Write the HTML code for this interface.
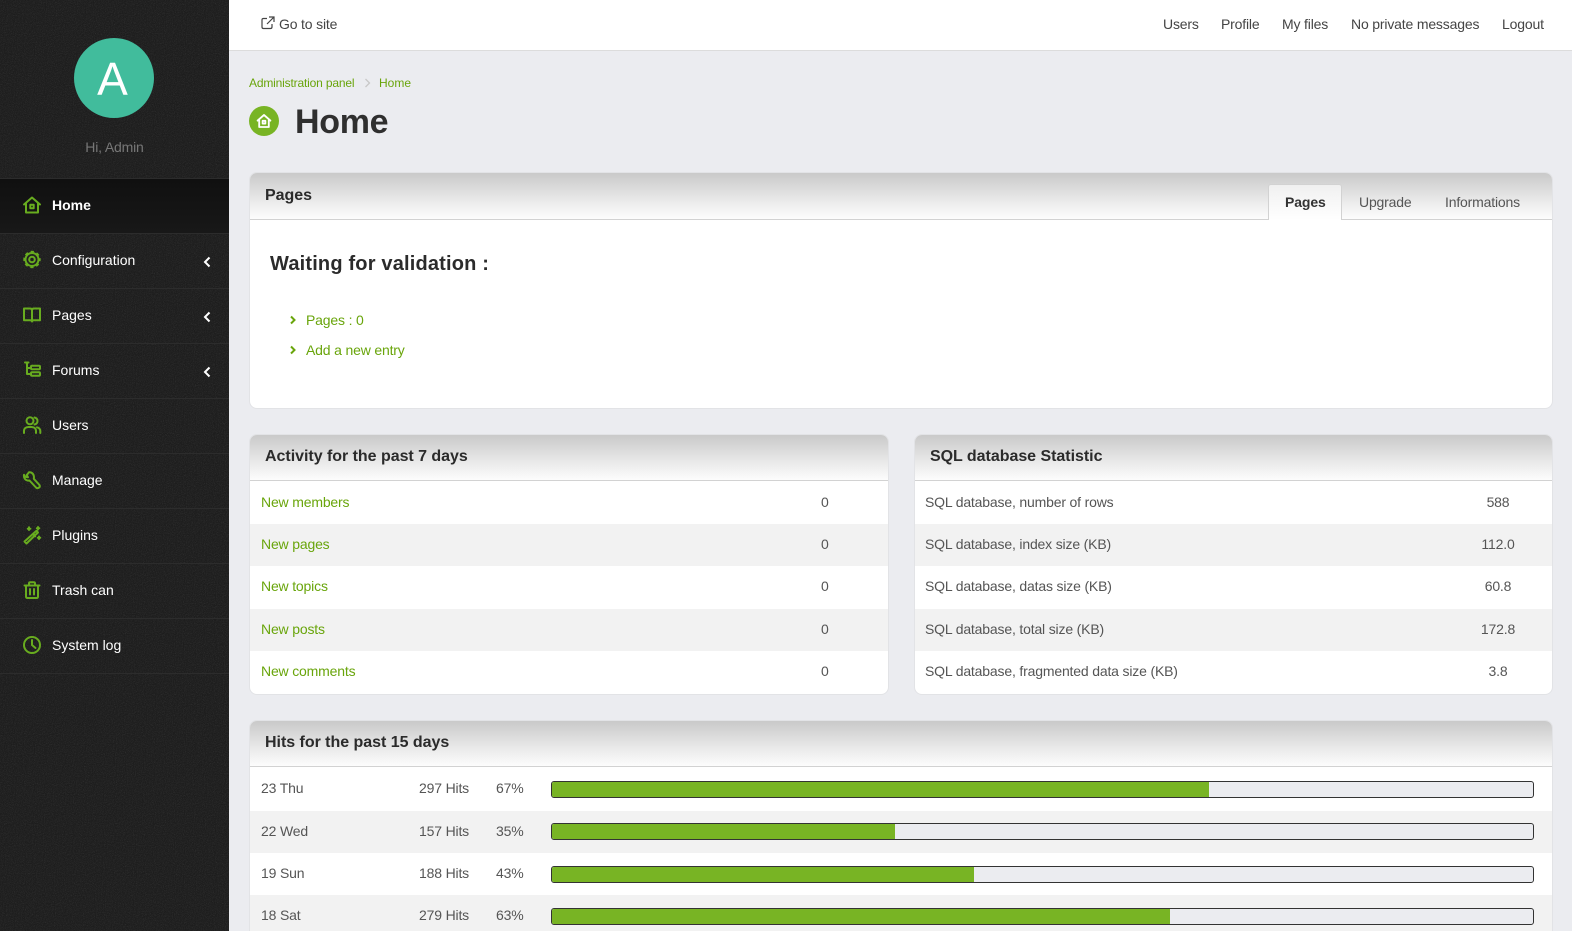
<!DOCTYPE html>
<html><head><meta charset="utf-8"><title>Home</title>
<style>
*{box-sizing:border-box}
html,body{margin:0;padding:0;width:1572px;height:931px;overflow:hidden;background:#ebecf0;font-family:"Liberation Sans",sans-serif;font-size:14px;color:#555}
#wrap{position:relative;width:1572px;height:931px;overflow:hidden;background:#ebecf0}
.t{position:absolute;white-space:nowrap;line-height:20px;letter-spacing:-.17px}
.abs{position:absolute}
#side{position:absolute;left:0;top:0;width:229px;height:931px;background:#1f1f1f;overflow:hidden}
.line{position:absolute;left:0;width:229px;height:1px;background:#2c2c2c}
.t.m{color:#fff;left:52px;letter-spacing:0}
.ic{position:absolute;left:21px;width:20px;height:20px;fill:none;stroke:#68ac1f;stroke-width:2;stroke-linecap:round;stroke-linejoin:round}
.ch{position:absolute;left:202px;width:10px;height:12px;fill:none;stroke:#fff;stroke-width:2}
.panel{position:absolute;background:#fff;border:1px solid #e2e3e6;border-radius:8px;overflow:hidden}
.head{position:absolute;left:0;top:0;right:0;background:linear-gradient(#c9c9c9,#ececec 65%,#fcfcfc);border-bottom:1px solid #d2d2d2}
.t.h{font-weight:bold;font-size:16px;color:#2b2b2b;letter-spacing:-.03px}
.g{color:#69a50b}
.row{position:absolute;height:42px;background:#f2f2f2}
.bar{position:absolute;left:551px;width:983px;height:17px;background:#ebecf0;border:1px solid #333;border-radius:3px;overflow:hidden}
.bar i{display:block;height:100%;background:#78b424}
.top{color:#444}
</style></head><body><div id="wrap">
<div id="side">
<svg class="abs" style="left:0;top:0" width="229" height="931"><filter id="n"><feTurbulence type="fractalNoise" baseFrequency="1.1" numOctaves="2" seed="3"/><feColorMatrix values="0 0 0 0 .5 0 0 0 0 .5 0 0 0 0 .5 .5 .5 0 0 -.42"/></filter><rect width="229" height="931" fill="#1d1d1d"/><rect width="229" height="931" filter="url(#n)" opacity=".35"/></svg>
<div class="abs" style="left:0;top:179px;width:229px;height:54px;background:linear-gradient(#101010,#181818)"></div>
<div class="abs" style="left:74px;top:38px;width:80px;height:80px;border-radius:50%;background:#41bc9c"></div>
<div class="t" style="left:72.500px;top:59px;width:80px;text-align:center;color:#fff;font-size:46px;line-height:40px;letter-spacing:0">A</div>
<div class="t" style="left:0;top:137px;width:229px;text-align:center;color:#777">Hi, Admin</div>
<div class="line" style="top:178px"></div><div class="line" style="top:233px"></div><div class="line" style="top:288px"></div><div class="line" style="top:343px"></div><div class="line" style="top:398px"></div><div class="line" style="top:453px"></div><div class="line" style="top:508px"></div><div class="line" style="top:563px"></div><div class="line" style="top:618px"></div><div class="line" style="top:673px"></div>
<svg class="ic" style="top:195px;left:21.500px" viewBox="0 0 20 20"><path d="M2 9.500 10 2.500l8 7M4 8.500V17.500H16V8.500"/><rect x="8.300" y="9.800" width="3.400" height="3.400"/></svg>
<svg class="ic" style="top:250px;left:21.500px" viewBox="0 0 20 20"><circle cx="10" cy="9.500" r="6.500"/><circle cx="10" cy="9.500" r="2.800"/><circle cx="10" cy="9.500" r="7.700" stroke-linecap="butt" stroke-dasharray="3.200 2.850" stroke-dashoffset="1.600"/></svg>
<svg class="ic" style="top:305px;left:21.500px" viewBox="0 0 20 20"><path d="M2 3.500H8C9.200 3.500 10 4.200 10 5.300V16.500C10 15.500 9.200 15.200 8 15.200H2zM18 3.500H12C10.800 3.500 10 4.200 10 5.300V16.500C10 15.500 10.800 15.200 12 15.200H18z"/></svg>
<svg class="ic" style="top:360px;left:21.500px" viewBox="0 0 20 20"><path d="M3 2.500H6.500M5 2.500V14H8.500M5 8H8.500"/><rect x="9" y="5.700" width="9" height="3.600" rx="1"/><rect x="9" y="12.200" width="9" height="3.600" rx="1"/></svg>
<svg class="ic" style="top:415px;left:21.500px" viewBox="0 0 20 20"><circle cx="8" cy="5.800" r="3.500"/><path d="M2 18V16C2 13.500 4 12 6.500 12H9.500C12 12 14 13.500 14 16V18M12.500 2.500C14.500 3 15.500 4.500 15.500 6S14.500 9 12.500 9.500M15 12.300C17 12.800 18.300 14.200 18.300 16V18"/></svg>
<svg class="ic" style="top:470px;left:21.500px" viewBox="0 0 20 20"><path d="M7 2.300 4.800 5 6 7.300 3.300 6.800 2 4.800C1.500 8.300 3.800 11 7.500 10.500L14 17.500C15.500 19 18.800 17.500 17.500 15L11.800 8.800C12.500 5 10.500 2 7 2.300Z"/></svg>
<svg class="ic" style="top:525px;left:21.500px" viewBox="0 0 20 20"><path d="M14.500 5.800 2.500 16.500 4.500 18.500 16 7.500ZM11 9 13.200 11.300M7 2.300V5M5.700 3.700H8.400M16 2V4.500M14.800 3.200H17.300M17 11.500V14M15.800 12.800H18.300"/></svg>
<svg class="ic" style="top:580px;left:21.500px" viewBox="0 0 20 20"><path d="M2.500 5.500H17.500M7 5.500V3.500C7 2.800 7.500 2.300 8.200 2.300H11.800C12.500 2.300 13 2.800 13 3.500V5.500M4 5.500V16.500C4 17.500 4.700 18 5.500 18H14.500C15.300 18 16 17.500 16 16.500V5.500M8 9V14.500M12 9V14.500"/></svg>
<svg class="ic" style="top:635px;left:21.500px" viewBox="0 0 20 20"><circle cx="10" cy="10" r="8"/><path d="M10 5V10L13.500 13"/></svg>
<div class="t m" style="top:195px;font-weight:bold">Home</div>
<div class="t m" style="top:250px">Configuration</div>
<div class="t m" style="top:305px">Pages</div>
<div class="t m" style="top:360px">Forums</div>
<div class="t m" style="top:415px">Users</div>
<div class="t m" style="top:470px">Manage</div>
<div class="t m" style="top:525px">Plugins</div>
<div class="t m" style="top:580px">Trash can</div>
<div class="t m" style="top:635px">System log</div>
<svg class="ch" style="top:256px" viewBox="0 0 10 12"><path d="M7.500 1.500 3 6l4.500 4.500"/></svg>
<svg class="ch" style="top:311px" viewBox="0 0 10 12"><path d="M7.500 1.500 3 6l4.500 4.500"/></svg>
<svg class="ch" style="top:366px" viewBox="0 0 10 12"><path d="M7.500 1.500 3 6l4.500 4.500"/></svg>
</div>

<div class="abs" style="left:229px;top:0;width:1343px;height:51px;background:#fff;border-bottom:1px solid #dcdcdc"></div>
<svg class="abs" style="left:261px;top:16px" width="14" height="14" viewBox="0 0 14 14" fill="none" stroke="#444" stroke-width="1.200"><path d="M6 2.500H2.500C1.500 2.500 1 3 1 4v7c0 1 .5 1.500 1.500 1.500h7c1 0 1.500-.5 1.500-1.500V8M8 1h5v5M13 1 6 8"/></svg>
<div class="t top" style="left:279px;top:14px">Go to site</div>
<div class="t top" style="left:1163px;top:14px">Users</div>
<div class="t top" style="left:1221px;top:14px">Profile</div>
<div class="t top" style="left:1282px;top:14px">My files</div>
<div class="t top" style="left:1351px;top:14px">No private messages</div>
<div class="t top" style="left:1502px;top:14px">Logout</div>

<div class="t g" style="left:249px;top:73px;font-size:12px">Administration panel</div>
<svg class="abs" style="left:363px;top:78px" width="9" height="10" viewBox="0 0 9 10" fill="none" stroke="#c8c8c8" stroke-width="1.300"><path d="M2.500 1l4 4-4 4"/></svg>
<div class="t g" style="left:379px;top:73px;font-size:12px;letter-spacing:0">Home</div>
<div class="abs" style="left:249px;top:106px;width:30px;height:30px;border-radius:50%;background:#78b424"></div>
<svg class="abs" style="left:256px;top:113px" width="16" height="16" viewBox="0 0 20 20" fill="none" stroke="#fff" stroke-width="2.300" stroke-linejoin="round" stroke-linecap="round"><path d="M2 9.500 10 2.500l8 7M4 8.500V17.500H16V8.500"/><rect x="8.300" y="9.800" width="3.400" height="3.400"/></svg>
<div class="t" style="left:295px;top:101px;line-height:42px;font-size:34px;font-weight:bold;color:#2f2f2f;letter-spacing:-.3px">Home</div>

<div class="panel" style="left:249px;top:172px;width:1304px;height:237px">
<div class="head" style="height:47px"></div>
<div class="abs" style="left:1018px;top:11px;width:74px;height:36px;background:linear-gradient(#f0f0f0,#fff);border:1px solid #d2d2d2;border-bottom:0;border-radius:3px 3px 0 0"></div>
</div>
<div class="t h" style="left:265px;top:186px">Pages</div>
<div class="t" style="left:1285px;top:192px;font-weight:bold;color:#333;letter-spacing:-.1px">Pages</div>
<div class="t" style="left:1359px;top:192px;color:#555">Upgrade</div>
<div class="t" style="left:1445px;top:192px;color:#555">Informations</div>
<div class="t" style="left:270px;top:253px;font-size:20px;font-weight:bold;color:#2b2b2b;line-height:22px;letter-spacing:.18px">Waiting for validation :</div>
<svg class="abs" style="left:289px;top:315px" width="8" height="10" viewBox="0 0 8 10" fill="none" stroke="#69a50b" stroke-width="2"><path d="M2 1.500 5.500 5 2 8.500"/></svg>
<svg class="abs" style="left:289px;top:345px" width="8" height="10" viewBox="0 0 8 10" fill="none" stroke="#69a50b" stroke-width="2"><path d="M2 1.500 5.500 5 2 8.500"/></svg>
<div class="t g" style="left:306px;top:310px">Pages : 0</div>
<div class="t g" style="left:306px;top:340px">Add a new entry</div>

<div class="panel" style="left:249px;top:434px;width:639.500px;height:261px"><div class="head" style="height:46px"></div></div>
<div class="row" style="left:250px;top:524px;width:638px"></div>
<div class="row" style="left:250px;top:609px;width:638px"></div>
<div class="t h" style="left:265px;top:447px">Activity for the past 7 days</div>
<div class="t g" style="left:261px;top:492px">New members</div>
<div class="t g" style="left:261px;top:534px">New pages</div>
<div class="t g" style="left:261px;top:576px">New topics</div>
<div class="t g" style="left:261px;top:619px">New posts</div>
<div class="t g" style="left:261px;top:661px">New comments</div>
<div class="t" style="left:821px;top:492px">0</div><div class="t" style="left:821px;top:534px">0</div><div class="t" style="left:821px;top:576px">0</div><div class="t" style="left:821px;top:619px">0</div><div class="t" style="left:821px;top:661px">0</div>

<div class="panel" style="left:914px;top:434px;width:639px;height:261px"><div class="head" style="height:46px"></div></div>
<div class="row" style="left:915px;top:524px;width:637px"></div>
<div class="row" style="left:915px;top:609px;width:637px"></div>
<div class="t h" style="left:930px;top:447px">SQL database Statistic</div>
<div class="t" style="left:925px;top:492px">SQL database, number of rows</div>
<div class="t" style="left:925px;top:534px">SQL database, index size (KB)</div>
<div class="t" style="left:925px;top:576px">SQL database, datas size (KB)</div>
<div class="t" style="left:925px;top:619px">SQL database, total size (KB)</div>
<div class="t" style="left:925px;top:661px">SQL database, fragmented data size (KB)</div>
<div class="t" style="left:1448px;width:100px;text-align:center;top:492px">588</div>
<div class="t" style="left:1448px;width:100px;text-align:center;top:534px">112.0</div>
<div class="t" style="left:1448px;width:100px;text-align:center;top:576px">60.8</div>
<div class="t" style="left:1448px;width:100px;text-align:center;top:619px">172.8</div>
<div class="t" style="left:1448px;width:100px;text-align:center;top:661px">3.8</div>

<div class="panel" style="left:249px;top:720px;width:1304px;height:240px"><div class="head" style="height:46px"></div></div>
<div class="row" style="left:250px;top:811px;width:1302px"></div>
<div class="row" style="left:250px;top:895px;width:1302px;height:36px"></div>
<div class="t h" style="left:265px;top:733px">Hits for the past 15 days</div>
<div class="t" style="left:261px;top:778px">23 Thu</div><div class="t" style="left:419px;top:778px">297 Hits</div><div class="t" style="left:496px;top:778px">67%</div>
<div class="t" style="left:261px;top:821px">22 Wed</div><div class="t" style="left:419px;top:821px">157 Hits</div><div class="t" style="left:496px;top:821px">35%</div>
<div class="t" style="left:261px;top:863px">19 Sun</div><div class="t" style="left:419px;top:863px">188 Hits</div><div class="t" style="left:496px;top:863px">43%</div>
<div class="t" style="left:261px;top:905px">18 Sat</div><div class="t" style="left:419px;top:905px">279 Hits</div><div class="t" style="left:496px;top:905px">63%</div>
<div class="bar" style="top:781px"><i style="width:67%"></i></div>
<div class="bar" style="top:823px"><i style="width:35%"></i></div>
<div class="bar" style="top:866px"><i style="width:43%"></i></div>
<div class="bar" style="top:908px"><i style="width:63%"></i></div>
</div></body></html>
